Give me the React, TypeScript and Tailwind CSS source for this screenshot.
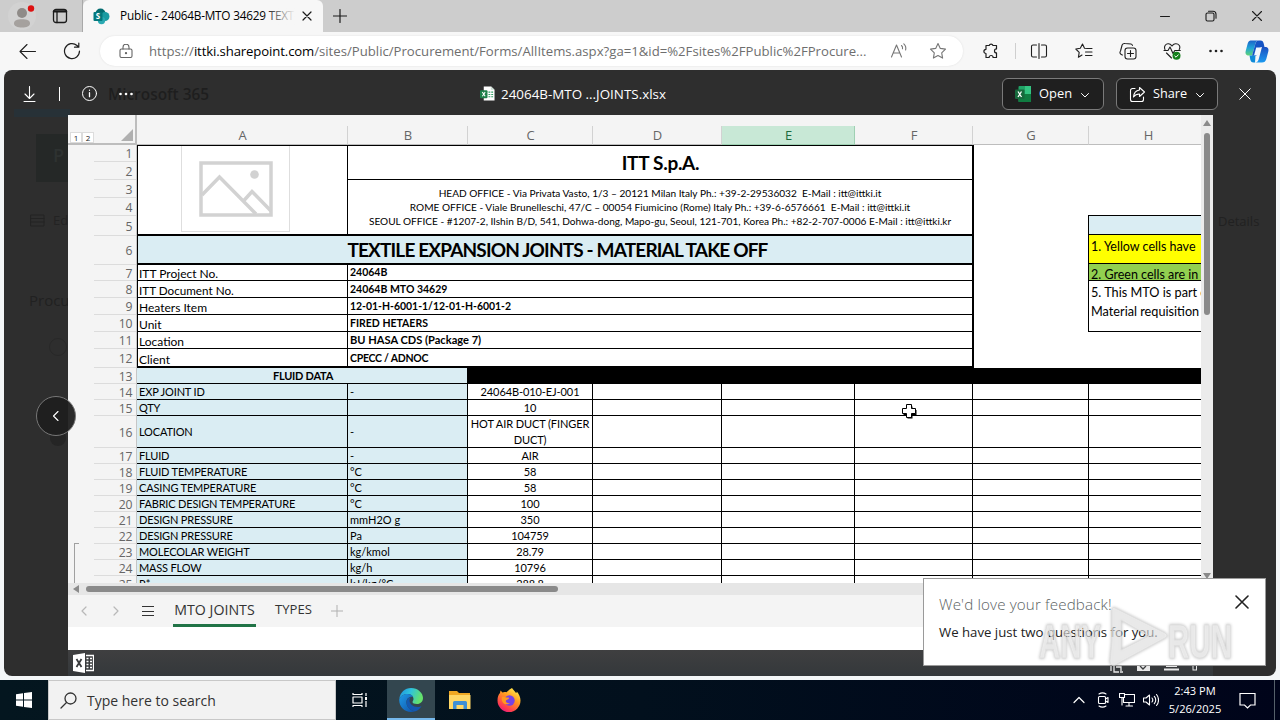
import type { ReactNode } from 'react'

interface DataRow {
    n: number
    h: string
    label: string
    unit: string
    value: string
}

const columns = [
    { name: 'A', w: 'w-[211px]' },
    { name: 'B', w: 'w-[120px]' },
    { name: 'C', w: 'w-[125px]' },
    { name: 'D', w: 'w-[129px]' },
    { name: 'E', w: 'w-[133px]' },
    { name: 'F', w: 'w-[118px]' },
    { name: 'G', w: 'w-[116px]' },
    { name: 'H', w: 'w-[119px]' },
]

const rowHeights = [
    'h-[17px]', 'h-[18px]', 'h-[18px]', 'h-[18px]', 'h-[20px]', 'h-[29px]',
    'h-[16px]', 'h-[17px]', 'h-[17px]', 'h-[17px]', 'h-[17px]', 'h-[19px]',
    'h-4', 'h-4', 'h-4', 'h-8', 'h-4', 'h-4', 'h-4', 'h-4', 'h-4', 'h-4', 'h-4', 'h-4', 'h-4',
]

const infoRows = [
    { label: 'ITT Project No.', value: '24064B', h: 'h-4', f: 'pt-[3px] text-[12px]', v: 'pt-[2px] text-[10.5px]' },
    { label: 'ITT Document No.', value: '24064B MTO 34629', h: 'h-[17px]', f: 'pt-1 text-[11.7px]', v: 'pt-[3px] text-[10.5px]' },
    { label: 'Heaters Item', value: '12-01-H-6001-1/12-01-H-6001-2', h: 'h-[17px]', f: 'pt-1 text-[12px]', v: 'pt-[3px] text-[10.450px]' },
    { label: 'Unit', value: 'FIRED HETAERS', h: 'h-[17px]', f: 'pt-1 text-[12px]', v: 'pt-[3px] text-[10.5px]' },
    { label: 'Location', value: 'BU HASA CDS (Package 7)', h: 'h-[17px]', f: 'pt-1 text-[12px]', v: 'pt-[2px] text-[11.1px]' },
    { label: 'Client', value: 'CPECC / ADNOC', h: 'h-[19px]', f: 'pt-[5px] text-[12px]', v: 'pt-1 text-[10.5px] tracking-[-0.25px]' },
]

const dataRows: DataRow[] = [
    { n: 14, h: 'h-4', label: 'EXP JOINT ID', unit: '-', value: '24064B-010-EJ-001' },
    { n: 15, h: 'h-4', label: 'QTY', unit: '', value: '10' },
    { n: 16, h: 'h-8', label: 'LOCATION', unit: '-', value: 'HOT AIR DUCT (FINGER DUCT)' },
    { n: 17, h: 'h-4', label: 'FLUID', unit: '-', value: 'AIR' },
    { n: 18, h: 'h-4', label: 'FLUID TEMPERATURE', unit: '°C', value: '58' },
    { n: 19, h: 'h-4', label: 'CASING TEMPERATURE', unit: '°C', value: '58' },
    { n: 20, h: 'h-4', label: 'FABRIC DESIGN TEMPERATURE', unit: '°C', value: '100' },
    { n: 21, h: 'h-4', label: 'DESIGN PRESSURE', unit: 'mmH2O g', value: '350' },
    { n: 22, h: 'h-4', label: 'DESIGN PRESSURE', unit: 'Pa', value: '104759' },
    { n: 23, h: 'h-4', label: 'MOLECOLAR WEIGHT', unit: 'kg/kmol', value: '28.79' },
    { n: 24, h: 'h-4', label: 'MASS FLOW', unit: 'kg/h', value: '10796' },
    { n: 25, h: 'h-4', label: 'R*', unit: 'kJ/kg/°C', value: '288.8' },
]

function Icon({ size = 16, sw = 1.2, className = '', children }: { size?: number; sw?: number; className?: string; children: ReactNode }) {
    return (
        <svg
            width={size}
            height={size}
            viewBox={`0 0 ${size} ${size}`}
            fill="none"
            stroke="currentColor"
            strokeWidth={sw}
            strokeLinecap="round"
            strokeLinejoin="round"
            className={`shrink-0 ${className}`}
        >
            {children}
        </svg>
    )
}

function Slot({ w = 'w-11', children }: { w?: string; children: ReactNode }) {
    return <div className={`flex h-full shrink-0 items-center justify-center ${w}`}>{children}</div>
}

function TabBar() {
    return (
        <div className="flex h-8 shrink-0 bg-[#cdcdcd] text-[#1b1b1b]">
            <Slot>
                <svg width="30" height="30" viewBox="0 0 30 30">
                    <circle cx="15" cy="15" r="14" fill="#d2d2d2" />
                    <circle cx="15" cy="12" r="5" fill="#8f8b88" />
                    <path d="M7 22.5c0-3 3-4.300 8-4.300s8 1.300 8 4.300c0 2.600-3.500 4-8 4s-8-1.400-8-4z" fill="#a5a19e" />
                    <circle cx="24" cy="7.500" r="3.200" fill="#dd1111" />
                </svg>
            </Slot>
            <Slot w="w-[32px]">
                <Icon sw={1.3}>
                    <rect x="1.500" y="1.500" width="13" height="13" rx="2.500" />
                    <path d="M5 4.500v10" />
                    <path d="M2 3.400h12" strokeWidth="2.400" />
                </Icon>
            </Slot>
            <div className="w-[7px] border-r border-[#a9a9a9]" />
            <div className="flex w-[240px] items-center rounded-t-md bg-[#f7f7f7] pl-[10px]">
                <svg width="17" height="17" viewBox="0 0 17 17" className="shrink-0">
                    <circle cx="7.500" cy="5.500" r="5" fill="#036c70" />
                    <circle cx="12" cy="8.500" r="4.500" fill="#1a9ba1" />
                    <circle cx="8.500" cy="12.500" r="3.700" fill="#2aa9b2" />
                    <rect x="0.500" y="4" width="9" height="9" rx="1" fill="#03787c" />
                    <text x="5" y="11.200" fontSize="8" fontWeight="700" fill="#fff" textAnchor="middle" fontFamily="Open Sans, sans-serif">S</text>
                </svg>
                <div className="relative ml-[10px] w-[175px] overflow-hidden text-[11.8px] tracking-[-0.22px] whitespace-nowrap text-black">
                    Public - 24064B-MTO 34629 TEXT
                    <div className="absolute inset-y-0 right-0 w-8 bg-linear-to-r from-transparent to-[#f7f7f7]" />
                </div>
                <Icon size={10} sw={1.2} className="ml-[7px]">
                    <path d="M1 1l8 8M9 1l-8 8" />
                </Icon>
            </div>
            <Slot w="w-[34px]">
                <Icon size={14} sw={1.2}>
                    <path d="M7 .5v13M.5 7h13" />
                </Icon>
            </Slot>
            <div className="ml-auto flex">
                <Slot w="w-[46px]"><Icon size={10} sw={1}><path d="M.5 5.500h9" /></Icon></Slot>
                <Slot w="w-[46px]">
                    <Icon size={12} sw={1.1}>
                        <rect x="1" y="3" width="8" height="8" rx="1.500" />
                        <path d="M3.500 1.200h4.500a3 3 0 0 1 3 3v4" />
                    </Icon>
                </Slot>
                <Slot w="w-[46px]"><Icon size={10} sw={1.1}><path d="M.5.500l9 9M9.500.500l-9 9" /></Icon></Slot>
            </div>
        </div>
    )
}

function Toolbar() {
    return (
        <div className="flex h-[38px] shrink-0 items-center bg-[#f7f7f7] pl-1.5 text-[#1f1f1f]">
            <Slot>
                <Icon size={18} sw={1.1}><path d="M16.500 9.500H1.500M8 2.500l-7 7 7 7" /></Icon>
            </Slot>
            <Slot>
                <Icon size={18} sw={1.2}><path d="M16.500 9A7.500 7.500 0 1 1 14 3.500l1.500 1.500M15.800 1v4.200h-4.300" /></Icon>
            </Slot>
            <div className="ml-1.5 flex h-[30px] w-[863px] items-center rounded-full bg-white pl-[19px] shadow-[0_0_2px_#ddd]">
                <Icon size={14} sw={1.1} className="text-[#666]">
                    <rect x="1" y="5" width="12" height="8.500" rx="1.500" />
                    <path d="M4 5V3.200a3 3 0 0 1 6 0V5" />
                    <circle cx="7" cy="9.200" r=".6" fill="currentColor" />
                </Icon>
                <div className="ml-4 w-[730px] pt-0.5 text-[13.170px] whitespace-nowrap text-[#6e6e6e]">
                    https://<span className="tracking-[-0.12px] text-black">ittki.sharepoint.com</span>/sites/Public/Procurement/Forms/AllItems.aspx?ga=1&amp;id=%2Fsites%2FPublic%2FProcure...
                </div>
                <Icon size={18} sw={1.1} className="ml-[11px] text-[#767676]">
                    <path d="M1.500 15L6.500 3l5 12M3.200 11h6.600M11.500 3.500c1 .8 1.300 2 1 3.300M13.800 1.800c1.800 1.600 2.400 3.800 1.800 6.200" />
                </Icon>
                <Icon size={18} sw={1.1} className="ml-[21px] text-[#767676]">
                    <path d="M9 1.500l2.300 4.900 5.200.7-3.800 3.700.9 5.300L9 13.600l-4.600 2.500.9-5.300L1.500 7.100l5.200-.7z" />
                </Icon>
            </div>
            <div className="ml-1.5 flex h-full items-center">
                <Slot>
                    <Icon size={18} sw={1.2}>
                        <path d="M5 3.500h2.200a2 2 0 0 1 3.800 0h3.500v3.400a2 2 0 0 0 0 4v4.600h-3.400a2 2 0 0 0-4 0H4V11.500a2.100 2.100 0 1 1 0-4.200V3.500z" />
                    </Icon>
                </Slot>
                <div className="mx-[1.5px] h-4 w-px bg-[#cfcfcf]" />
                <Slot>
                    <Icon size={18} sw={1.1}>
                        <path d="M6.500 3H3a1.500 1.500 0 0 0-1.500 1.500v9A1.500 1.500 0 0 0 3 15h3.500M11.500 3H15a1.500 1.500 0 0 1 1.500 1.500v9A1.500 1.500 0 0 1 15 15h-3.500M9 1.500v15" />
                    </Icon>
                </Slot>
                <Slot w="w-[45px]">
                    <Icon size={18} sw={1.1}>
                        <path d="M12.500 6.500l-3-.3L7.500 2 5.300 6.200.8 7l3.400 3.300-.8 5L7 13M10.500 10h6.500M10.500 13.500H17M12 6.500h5" />
                    </Icon>
                </Slot>
                <Slot>
                    <Icon size={18} sw={1.1}>
                        <rect x="6" y="6" width="11" height="11" rx="2.500" />
                        <path d="M11.500 8.500v6M8.500 11.500h6M3.500 13A2.500 2.500 0 0 1 1.500 9L3 3.500A2.500 2.500 0 0 1 6 1.500l6 .5a2 2 0 0 1 1.500 1.500" />
                    </Icon>
                </Slot>
                <Slot>
                    <Icon size={18} sw={1.1}>
                        <path d="M2 7.500C.5 4 3 1.500 5.500 1.800 7.500 2 8.500 3.500 9 4c.5-.5 1.500-2 3.500-2.200C15.500 1.500 18 4 16.200 7.500M1 8.500h4L7 5l3 6.500 1.800-3h5.500M3.500 11l5 5" />
                        <circle cx="13.500" cy="13.800" r="4" fill="#13801b" stroke="none" />
                        <path d="M11.800 14l1.200 1.200 2.300-2.400" stroke="#fff" strokeWidth="1" />
                    </Icon>
                </Slot>
                <Slot>
                    <svg width="14" height="4" viewBox="0 0 14 4" fill="#1f1f1f">
                        <circle cx="1.500" cy="2" r="1.300" />
                        <circle cx="7" cy="2" r="1.300" />
                        <circle cx="12.500" cy="2" r="1.300" />
                    </svg>
                </Slot>
                <Slot w="w-[38px]">
                    <svg width="24" height="23" viewBox="0 0 24 23">
                        <defs>
                            <linearGradient id="cp1" x1="0" y1="0" x2="0" y2="1">
                                <stop offset="0" stopColor="#1b63c9" />
                                <stop offset=".5" stopColor="#1fa3d8" />
                                <stop offset="1" stopColor="#5fd476" />
                            </linearGradient>
                            <linearGradient id="cp2" x1="0" y1="0" x2="0" y2="1">
                                <stop offset="0" stopColor="#1a4fc0" />
                                <stop offset="1" stopColor="#1b9af0" />
                            </linearGradient>
                        </defs>
                        <path d="M17 7h3c3 0 4 2 3.300 4.500l-2 7.500c-.7 2.500-2 3.500-4.300 3.500h-7c2 0 3-1 3.600-3l2.600-9.500C16.500 8.500 17 7 17 7z" fill="url(#cp2)" />
                        <path d="M7 15.500H4c-3 0-4-2-3.300-4.500l2-7.500C3.400 1 4.700.5 7 .5h7c-2 0-3 1-3.600 3L7.800 13c-.3 1-.8 2.500-.8 2.500z" fill="url(#cp1)" />
                        <path d="M14 .5h1.500c2 0 2.700 1 3.200 3L19.500 7H17c-2 0-3 .8-3.500 2.500L12 15c-.5 1-1.500 1-2.500.8H7l3.200-11.500C10.800 2 11.800.5 14 .5z" fill="#1554c4" />
                        <path d="M13.500 7.500h-2.300L9 15.500h2.200c1 0 1.500-.5 1.800-1.500l1.800-6.500z" fill="#f1f8ff" />
                        <path d="M10 22.500H8.500c-2 0-2.700-1-3.200-3l-.8-4h5l1 .1z" fill="#0d8ad8" />
                    </svg>
                </Slot>
            </div>
        </div>
    )
}

function ViewerHeader() {
    return (
        <div className="relative flex h-[45px] shrink-0 items-center text-white">
            <div className="flex items-center pt-[3px] pl-[17px]">
                <Icon size={16} sw={1.1}><path d="M8.500 .5v11.500M4 8l4.500 4.500L13 8M3 15.500h11" /></Icon>
                <div className="ml-[22px] h-[14px] w-px bg-white" />
                <Icon size={16} sw={1} className="ml-[22px]">
                    <circle cx="7.500" cy="7.500" r="7" />
                    <path d="M7.500 6.700v4M7.500 4.200v.1" strokeWidth="1.300" />
                </Icon>
                <svg width="14" height="4" viewBox="0 0 14 4" fill="#fff" className="ml-[21px]">
                    <circle cx="1.500" cy="2" r="1.300" />
                    <circle cx="7" cy="2" r="1.300" />
                    <circle cx="12.500" cy="2" r="1.300" />
                </svg>
            </div>
            <div className="ml-[347px] flex items-center pt-[3px]">
                <svg width="15" height="15" viewBox="0 0 16 16" className="shrink-0">
                    <path d="M4 .5h8l3.500 3.500v11.500H4z" fill="#fff" />
                    <path d="M11.500.5V4H15.500z" fill="#c9ddd2" />
                    <rect x="0" y="4.500" width="8" height="8.500" rx="1" fill="#1c8049" />
                    <path d="M2.500 6.500l3 4.500M5.500 6.500l-3 4.500" stroke="#fff" strokeWidth="1.100" />
                    <path d="M9 6.500h2M12 6.500h2M9 9h2M12 9h2M9 11.500h2M12 11.500h2" stroke="#2e9e63" strokeWidth="1.200" />
                </svg>
                <span className="ml-[6px] text-[13.4px] whitespace-nowrap">24064B-MTO ...JOINTS.xlsx</span>
            </div>
            <div className="ml-auto flex items-center pt-[3px] pr-[25px] text-[12.9px]">
                <div className="flex h-8 w-[102px] items-center rounded-md border border-[#7a7a7a] bg-[#1f1f1f] pl-3">
                    <svg width="16" height="16" viewBox="0 0 16 16" className="shrink-0">
                        <rect x="3.500" y="0" width="12.500" height="16" rx="1" fill="#21a366" />
                        <rect x="10" y="0" width="6" height="8" fill="#33c481" />
                        <rect x="3.500" y="8" width="12.500" height="8" fill="#107c41" />
                        <rect x="0" y="3.500" width="9.500" height="9.500" rx="1" fill="#17693c" />
                        <path d="M3 5.500l3.500 5.500M6.500 5.500L3 11" stroke="#fff" strokeWidth="1.300" />
                    </svg>
                    <span className="ml-2">Open</span>
                    <Icon size={8} sw={1} className="ml-[9px] translate-y-px"><path d="M.5 2.500L4 6l3.500-3.500" /></Icon>
                </div>
                <div className="ml-3 flex h-8 w-[102px] items-center rounded-md border border-[#7a7a7a] bg-[#1f1f1f] pl-3">
                    <Icon size={17} sw={1.1}>
                        <path d="M6 2.500H3.500a2 2 0 0 0-2 2v9a2 2 0 0 0 2 2h9a2 2 0 0 0 2-2V11" />
                        <path d="M10.500 1.500l5 4.500-5 4.500V8C7.500 8 5.800 9 4.500 11c.3-4 2.500-6.500 6-7z" />
                    </Icon>
                    <span className="ml-[7px] text-[12.7px]">Share</span>
                    <Icon size={8} sw={1} className="ml-[9px] translate-y-px"><path d="M.5 2.500L4 6l3.500-3.500" /></Icon>
                </div>
                <Icon size={12} sw={1} className="ml-[21px]"><path d="M.8.800l10.400 10.400M11.200.800L.8 11.200" /></Icon>
            </div>
        </div>
    )
}

function ColumnHeader() {
    return (
        <div className="flex h-[30px] shrink-0 bg-[#f4f4f4]">
            <div className="flex w-[69px] shrink-0 items-end justify-between border-r-2 border-b-2 border-[#bdbdbd] pl-0.5">
                <div className="flex h-[11px] text-[8px] leading-[11px] text-[#222]">
                    <span className="w-3 border border-[#dcdcdc] bg-white text-center leading-[10px]">1</span>
                    <span className="w-3 border border-[#dcdcdc] bg-white text-center leading-[10px]">2</span>
                </div>
                <svg width="12" height="12" viewBox="0 0 12 12" className="mr-0.5 mb-0.5"><path d="M12 0v12H0z" fill="#b0b0b0" /></svg>
            </div>
            <div className="flex flex-1 items-end overflow-hidden">
                {columns.map(c => (
                    <div
                        key={c.name}
                        className={`flex h-[19px] shrink-0 items-center justify-center border-r border-b pt-0.5 pl-px text-[13px] ${c.w} ${
                            c.name === 'E' ? 'border-[#9fd0b3] bg-[#c8e8d6] text-[#1d6b40]' : 'border-r-[#d2d2d2] border-b-[#bdbdbd] text-[#666]'
                        }`}
                    >
                        {c.name}
                    </div>
                ))}
            </div>
        </div>
    )
}

function RowHeader() {
    return (
        <div className="flex w-[69px] shrink-0 bg-[#f4f4f4]">
            <div className="w-[26px] shrink-0 pt-[398px] pl-[6px]">
                <div className="h-12 w-[5px] border-t border-l border-[#a0a0a0]" />
            </div>
            <div className="w-[43px] shrink-0 border-r border-[#c6c6c6] text-[12.2px] tracking-[-0.4px] text-[#666]">
                {rowHeights.map((h, i) => (
                    <div key={i} className={`flex items-center justify-end border-b border-[#dcdcdc] pt-[3px] pr-[4px] ${h}`}>
                        {i + 1}
                    </div>
                ))}
            </div>
        </div>
    )
}

function TitleBlock() {
    return (
        <div className="w-[837px] shrink-0 border-t border-r-2 border-black">
            <div className="flex h-[90px] border-b-2 border-black">
                <div className="w-[211px] shrink-0 border-x border-black pl-[43px]">
                    <div className="flex h-[86px] w-[109px] items-center justify-center border border-t-0 border-[#dedede]">
                        <svg width="74" height="56" viewBox="0 0 74 56" fill="none" stroke="#d2d2d2" strokeWidth="3.500">
                            <rect x="2" y="2" width="70" height="52" />
                            <path d="M3 34L20.500 16 57 53M44.500 40l8.500-9.500L72 50" />
                            <circle cx="55.500" cy="13.500" r="4.300" fill="#d2d2d2" stroke="none" />
                        </svg>
                    </div>
                </div>
                <div className="flex-1">
                    <div className="flex h-[34px] items-center justify-center border-b border-black pt-0.5 pl-px text-[19px] font-bold tracking-[-0.3px]">
                        ITT S.p.A.
                    </div>
                    <div className="pt-[6px] text-center text-[10.1px] leading-[14px] whitespace-pre">
                        <div>{'HEAD OFFICE - Via Privata Vasto, 1/3 – 20121 Milan Italy Ph.: +39-2-29536032  E-Mail : itt@ittki.it'}</div>
                        <div>{'ROME OFFICE - Viale Brunelleschi, 47/C – 00054 Fiumicino (Rome) Italy Ph.: +39-6-6576661  E-Mail : itt@ittki.it'}</div>
                        <div>{'SEOUL OFFICE - #1207-2, Ilshin B/D, 541, Dohwa-dong, Mapo-gu, Seoul, 121-701, Korea Ph.: +82-2-707-0006 E-Mail : itt@ittki.kr'}</div>
                    </div>
                </div>
            </div>
            <div className="flex h-[29px] items-center justify-center border-b-2 border-l border-black bg-[#daedf3] pt-px pl-[5px] text-[19px] font-bold tracking-[-0.84px]">
                TEXTILE EXPANSION JOINTS - MATERIAL TAKE OFF
            </div>
            {infoRows.map((r, i) => (
                <div key={r.label} className={`flex border-black leading-none whitespace-nowrap ${r.h} ${i === infoRows.length - 1 ? 'border-b-2' : 'border-b'}`}>
                    <div className={`w-[211px] shrink-0 border-x border-black pl-px ${r.f}`}>{r.label}</div>
                    <div className={`pl-[2px] font-bold ${r.v}`}>{r.value}</div>
                </div>
            ))}
        </div>
    )
}

function Notes() {
    return (
        <div className="mt-[70px] ml-[114px] flex h-[117px] w-[113px] shrink-0 flex-col border border-r-0 border-black leading-none whitespace-nowrap">
            <div className="h-[19px] shrink-0 border-b border-black bg-[#daedf3]" />
            <div className="h-[29px] shrink-0 border-b border-black bg-[#ffff00] pt-[6px] pl-[2px] text-[12.5px]">1. Yellow cells have</div>
            <div className="h-[17px] shrink-0 border-b border-black bg-[#92d050] pt-[5px] pl-[2px] text-[12.5px]">2. Green cells are in</div>
            <div className="pt-[2px] pl-[2px] text-[12.7px] leading-[19px]">
                <div>5. This MTO is part of</div>
                <div>Material requisition</div>
            </div>
        </div>
    )
}

function Grid() {
    return (
        <div className="w-[1064px] overflow-hidden bg-white font-['Lato','Open_Sans',sans-serif] text-black">
            <div className="flex h-[223px]">
                <TitleBlock />
                <Notes />
            </div>
            <div className="flex h-4">
                <div className="flex w-[330px] shrink-0 items-center justify-center border-b border-black bg-[#daedf3] pt-0.5 text-[11px] font-bold tracking-[-0.25px]">
                    <span className="translate-x-px">FLUID DATA</span>
                </div>
                <div className="flex-1 bg-black" />
            </div>
            {dataRows.map(r => (
                <div key={r.n} className={`flex text-[11px] leading-4 tracking-[-0.17px] ${r.h}`}>
                    <div className="flex w-[211px] shrink-0 items-center border-r border-b border-black bg-[#daedf3] pt-px pl-[2px]">{r.label}</div>
                    <div className="flex w-[120px] shrink-0 items-center border-r border-b border-black bg-[#daedf3] pt-px pl-[2px] tracking-normal">{r.unit}</div>
                    <div className="flex w-[125px] shrink-0 items-center justify-center border-r border-b border-black pt-px text-center tracking-[-0.1px]">{r.value}</div>
                    {columns.slice(3).map(c => (
                        <div key={c.name} className={`shrink-0 border-r border-b border-black ${c.w}`} />
                    ))}
                </div>
            ))}
        </div>
    )
}

function Workbook() {
    return (
        <div className="flex h-[561px] w-[1145px] shrink-0 flex-col">
            <div className="flex h-[468px]">
                <div className="flex w-[1133px] flex-col overflow-hidden">
                    <ColumnHeader />
                    <div className="flex h-[438px] overflow-hidden">
                        <RowHeader />
                        <Grid />
                    </div>
                </div>
                <div className="flex w-3 flex-col items-center bg-[#ebebeb] pt-[5px]">
                    <svg width="8" height="6" viewBox="0 0 8 6"><path d="M4 0l4 6H0z" fill="#8a8a8a" /></svg>
                    <div className="mt-[7px] h-[182px] w-1.5 rounded-full bg-[#8a8a8a]" />
                    <svg width="8" height="6" viewBox="0 0 8 6" className="mt-auto mb-1"><path d="M4 6l4-6H0z" fill="#8a8a8a" /></svg>
                </div>
            </div>
            <div className="flex h-3 shrink-0 items-center bg-[#e6e6e6] pl-[5px]">
                <svg width="6" height="8" viewBox="0 0 6 8"><path d="M0 4l6-4v8z" fill="#8a8a8a" /></svg>
                <div className="ml-[7px] h-1.5 w-[472px] rounded-full bg-[#8a8a8a]" />
            </div>
            <div className="flex h-8 shrink-0 items-stretch bg-[#f4f4f4] text-[#333]">
                <Slot w="w-8"><Icon size={10} sw={1.2} className="text-[#b8b8b8]"><path d="M7 1L3 5l4 4" /></Icon></Slot>
                <Slot w="w-8"><Icon size={10} sw={1.2} className="text-[#b8b8b8]"><path d="M3 1l4 4-4 4" /></Icon></Slot>
                <Slot w="w-8"><Icon size={12} sw={1}><path d="M0 1.500h12M0 6.500h12M0 10.500h12" /></Icon></Slot>
                <div className="ml-[9px] flex w-[83px] items-center justify-center border-b-[3px] border-[#217346] pt-px text-[14.2px] font-medium whitespace-nowrap">MTO JOINTS</div>
                <div className="ml-[19px] flex items-center pb-[2px] text-[13.1px]">TYPES</div>
                <Icon size={12} sw={1} className="mt-[10px] ml-[19px] text-[#b0b0b0]"><path d="M6 0v12M0 6h12" /></Icon>
            </div>
            <div className="h-[23px] shrink-0 bg-white" />
            <div className="flex h-[26px] items-center bg-linear-to-b from-[#3f3f40] to-[#34383b] pl-[5px]">
                <svg width="21" height="20" viewBox="0 0 21 20">
                    <path d="M0 2L12 0v20L0 18z" fill="#fff" />
                    <path d="M3.500 6l5 8M8.500 6l-5 8" stroke="#3a3c3e" strokeWidth="1.800" />
                    <path d="M13 2.500h7.500v15H13" fill="none" stroke="#fff" strokeWidth="1.300" />
                    <path d="M13.500 5.500h2M17 5.500h2M13.500 8.500h2M17 8.500h2M13.500 11.500h2M17 11.500h2M13.500 14.500h2M17 14.500h2" stroke="#fff" strokeWidth="1.600" />
                </svg>
                <svg width="90" height="14" viewBox="0 0 90 14" className="ml-auto mt-2 mr-[15px]" fill="none" stroke="#e8e8e8" strokeWidth="1.300">
                    <path d="M3 2v9M6 4v8h5M8 7h5v4M12 12h3" />
                    <rect x="29" y="3" width="13" height="8" fill="#e8e8e8" stroke="none" />
                    <path d="M32 6l3 3 3-3" stroke="#3a3c3e" />
                    <path d="M56 9.500h15M58 6h11" strokeWidth="2" />
                    <rect x="85" y="3" width="3.500" height="7" strokeWidth="1" />
                </svg>
            </div>
        </div>
    )
}

function Feedback() {
    return (
        <div className="absolute top-[578px] left-[923px] h-[88px] w-[343px] border border-[#9a9a9a] bg-white pl-[15px]">
            <div className="pt-[14px] text-[15.150px] leading-[22px] font-light tracking-[0.15px] text-[#5a6262]">We'd love your feedback!</div>
            <div className="pt-[7px] text-[13.2px] leading-5 text-[#222]">We have just two questions for you.</div>
            <Icon size={14} sw={1.6} className="absolute top-[16px] right-[16px] text-[#222]"><path d="M1 1l12 12M13 1L1 13" /></Icon>
        </div>
    )
}

function Watermark() {
    return (
        <svg
            width="204"
            height="72"
            viewBox="0 0 204 72"
            className="absolute top-[602px] left-[1034px] drop-shadow-[0_0_1.5px_rgba(0,0,0,0.35)]"
            fill="#ffffff"
            fillOpacity=".55"
            stroke="#dedede"
            strokeWidth="1"
        >
            <text x="5" y="56" fontSize="48" fontWeight="700" fontFamily="Liberation Sans, sans-serif" textLength="62" lengthAdjust="spacingAndGlyphs">ANY</text>
            <path fillRule="evenodd" d="M78 8q0-4 5-1l48 24q4 3 0 5L81 63q-5 1-5-4l2-20zM87 18v30l28-14z" />
            <text x="134" y="56" fontSize="48" fontWeight="700" fontFamily="Liberation Sans, sans-serif" textLength="64" lengthAdjust="spacingAndGlyphs">RUN</text>
        </svg>
    )
}

function Taskbar() {
    return (
        <div className="flex h-10 shrink-0 items-stretch bg-linear-to-r from-[#04161f] via-[#02101d] to-[#00041a] text-white">
            <Slot w="w-12">
                <svg width="16" height="16" viewBox="0 0 16 16" fill="#fff">
                    <path d="M0 2.200L7 1.200v6.300H0zM8 1.100L16 0v7.500H8zM0 8.500h7v6.300l-7-1zM8 8.500h8V16l-8-1.100z" />
                </svg>
            </Slot>
            <div className="flex w-72 items-center border border-[#c8c8c8] bg-[#f2f2f2] pl-[11px] text-[#333]">
                <Icon size={17} sw={1.3}>
                    <circle cx="10.500" cy="6.500" r="5.500" />
                    <path d="M6.500 10.500L1 16" />
                </Icon>
                <span className="ml-[10px] pt-px text-[14px]">Type here to search</span>
            </div>
            <Slot w="w-12">
                <Icon size={16} sw={1.2}>
                    <path d="M1 1v1.500h9V1M1 15v-1.500h9V15M14 1v3M14 9v6" strokeLinecap="butt" />
                    <rect x="1" y="5" width="9" height="6" />
                    <rect x="13" y="5" width="2" height="3" fill="#fff" stroke="none" />
                </Icon>
            </Slot>
            <div className="ml-[3px] flex w-12 items-center justify-center border-b-2 border-[#76b9ed] bg-[#33464f] pt-0.5">
                <svg width="24" height="24" viewBox="0 0 24 24">
                    <defs>
                        <linearGradient id="eg1" x1="0" y1="0" x2="1" y2=".3">
                            <stop offset="0" stopColor="#1d8fe0" />
                            <stop offset=".5" stopColor="#2fc3dc" />
                            <stop offset="1" stopColor="#65e26b" />
                        </linearGradient>
                        <linearGradient id="eg2" x1="0" y1="0" x2="1" y2="1">
                            <stop offset="0" stopColor="#1e9ae6" />
                            <stop offset="1" stopColor="#0f4fa8" />
                        </linearGradient>
                    </defs>
                    <path d="M.3 11C1 4.500 6 0 12 0c7 0 12 5 12 10 0 3.500-2.500 6-6 6-3 0-4.500-1-4.500-2 0-.8 1-1.200 1-3 0-3-2.500-5-6-5C5 6 1.500 8 .3 11z" fill="url(#eg1)" />
                    <path d="M.3 11C1.500 8 5 6 8.500 6c3 0 5 1.300 5.700 3C10 8 7 11 7.500 15c.5 4.500 4.500 8 9 8.200-1.300.6-3 .8-4.500.8C5 24-.5 18 .3 11z" fill="url(#eg2)" />
                    <path d="M7.500 15c-.3-3 1.500-5.300 4.300-5.800-.8.800-1.300 2-1.300 3.300 0 3.500 3.500 6.500 8 6.500 2 0 3.300-.6 4-1-1.200 2.500-3.500 4.400-6 5.200-4.500-.2-8.500-3.700-9-8.200z" fill="#1458b0" />
                </svg>
            </div>
            <Slot w="w-[49px]">
                <svg width="22" height="20" viewBox="0 0 22 20">
                    <path d="M0 1h8l2 2h11v5H0z" fill="#f0a823" />
                    <path d="M0 5h21.500v14H0z" fill="#ffd766" />
                    <path d="M4 19v-6.500A1.500 1.500 0 0 1 5.500 11h11a1.500 1.500 0 0 1 1.500 1.500V19h-3.500v-4h-7v4z" fill="#3d8fd6" />
                </svg>
            </Slot>
            <Slot w="w-[49px]">
                <svg width="24" height="24" viewBox="0 0 24 24">
                    <defs>
                        <linearGradient id="ff" x1=".8" y1="0" x2=".2" y2="1">
                            <stop offset="0" stopColor="#fff04f" />
                            <stop offset=".4" stopColor="#ff9a1f" />
                            <stop offset=".8" stopColor="#ff3b50" />
                            <stop offset="1" stopColor="#e31587" />
                        </linearGradient>
                    </defs>
                    <path d="M15 0c1 2 3 3 4 5 .8-.3.800-1.500.800-1.500C22 6 23.500 9 23.500 12.500A11.500 11.500 0 0 1 .5 12.500C.5 9 1.500 6.500 3 5l.5-2.500L5.500 4.500c1-.5 2.500-.7 4-.2C11 2.500 13 1 15 0z" fill="url(#ff)" />
                    <circle cx="12.500" cy="12.500" r="5.200" fill="#7542e5" />
                    <path d="M5 9c2-1 3.500.5 6 .5 1 0 1.200.5.800 1.200-.8 1-2.800 1-3 2.300-.2 1.500 2 2.500 4 2-1.500 2-6 2-7.500-1.500C4.700 12 4.500 10.500 5 9z" fill="#ff9a1f" />
                </svg>
            </Slot>
            <div className="ml-auto flex items-stretch">
                <Slot w="w-6"><Icon size={12} sw={1.2}><path d="M1 8.500l5-5 5 5" /></Icon></Slot>
                <Slot w="w-6">
                    <Icon size={16} sw={1.1}>
                        <rect x="3.500" y="4.500" width="7" height="7" rx="1" />
                        <path d="M10.500 7l2.500-1.500v5L10.500 9M4 2c2-1.300 5-1.300 7 0M4 14c2 1.300 5 1.300 7 0" />
                    </Icon>
                </Slot>
                <Slot w="w-6">
                    <Icon size={16} sw={1.1}>
                        <path d="M4.500 2.500h11v8h-11zM10 10.500V14M7 14h6.500" />
                        <path d="M.5 1.500h5v4h-5zM3 5.500V13" fill="#02081c" />
                    </Icon>
                </Slot>
                <Slot w="w-6">
                    <Icon size={16} sw={1.1}>
                        <path d="M.5 6h2.500l3.500-3v10L3 10H.5zM9 6c.8 1 .8 3 0 4M11.300 4.300c1.900 2 1.900 5.400 0 7.400M13.500 2.500c2.700 3 2.700 8 0 11" />
                    </Icon>
                </Slot>
                <div className="flex w-[64px] flex-col items-center justify-center pb-px text-[11.1px] leading-[18px] whitespace-nowrap">
                    <span>2:43 PM</span>
                    <span>5/26/2025</span>
                </div>
                <div className="flex w-12 items-center justify-center border-r border-[#55606a] pr-[7px]">
                    <Icon size={17} sw={1.2}><path d="M1 1.500h15v11.500h-4.500L8.500 16l-3-3H1z" strokeLinejoin="miter" /></Icon>
                </div>
                <div className="w-[5px]" />
            </div>
        </div>
    )
}

export default function App() {
    return (
        <div className="relative flex h-[720px] w-[1280px] flex-col overflow-hidden bg-[#f3f6f8] font-['Open_Sans','Noto_Sans',sans-serif]">
            <TabBar />
            <Toolbar />
            <div className="relative mx-1 mb-1 flex h-[606px] shrink-0 flex-col overflow-hidden rounded-lg bg-[#2e2e2e]">
                {/* dimmed library page behind the viewer */}
                <div className="absolute top-[13px] left-[104px] text-[15.4px] font-semibold text-[#1e1e1e]">Microsoft 365</div>
                <div className="absolute top-[39px] left-[10px] h-[8px] w-14 bg-[#273137]" />
                <div className="absolute top-[64px] left-8 h-12 w-10 bg-[#252827] pt-2 pl-[17px] text-[18px] font-semibold text-[#2e3231]">P</div>
                <div className="absolute top-[141px] left-[26px] flex items-center gap-2 text-[13px] text-[#232323]">
                    <Icon size={15} sw={1}><path d="M1 2h13v11H1zM1 5.500h13M1 9h13" /></Icon>Edit
                </div>
                <div className="absolute top-[219px] left-[25px] text-[15px] text-[#212121]">Procurement</div>
                <div className="absolute top-[268px] left-[45px] size-[18px] rounded-full border border-[#282828]" />
                <div className="absolute top-[360px] left-[46px] size-[16px] rounded-full bg-[#252525]" />
                <div className="absolute top-[142px] left-[1214px] text-[13px] text-[#212121]">Details</div>
                <ViewerHeader />
                <div className="relative pl-16">
                    <Workbook />
                </div>
            </div>
            <Taskbar />
            <div className="absolute top-[396px] left-9 flex size-10 items-center justify-center rounded-full border-[1.5px] border-[#777] bg-[#1f1f1f]/95 text-white">
                <Icon size={12} sw={1.1}><path d="M8 1.500L3.500 6 8 10.500" /></Icon>
            </div>
            <svg width="17" height="17" viewBox="0 0 17 17" className="absolute top-[403px] left-[901px]">
                <path d="M6.500 3.500h5v3.500h4v5h-4v3.500h-5V12h-4V7h4z" fill="#000" />
                <path d="M5.500 1.500h5v4h4v5h-4v4h-5v-4h-4v-5h4z" fill="#fff" stroke="#000" />
            </svg>
            <Feedback />
            <Watermark />
        </div>
    )
}
